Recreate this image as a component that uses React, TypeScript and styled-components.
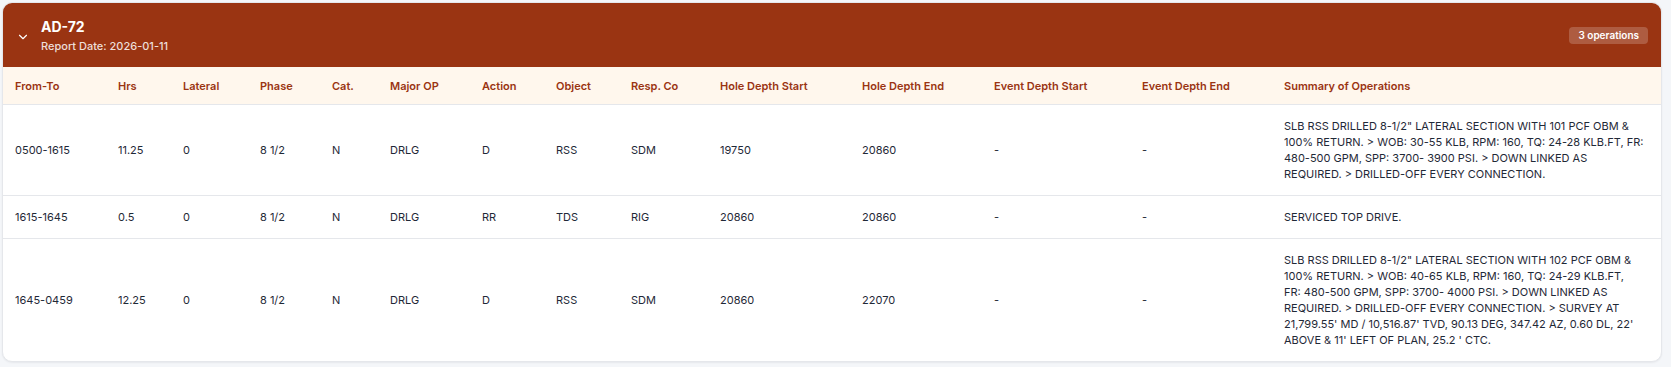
import React from "react";
import styled, { createGlobalStyle } from "styled-components";
import { ChevronDown } from "lucide-react";

const Global = createGlobalStyle`
  html, body { margin: 0; padding: 0; background: #f4f6f9; }
  body { font-family: Inter, "Noto Sans", "Liberation Sans", sans-serif; }
  * { box-sizing: border-box; }
`;

const Page = styled.div`
  padding: 2px 9px 8px 2px;
`;

const Card = styled.section`
  width: 1660px;
  background: #ffffff;
  border: 1px solid #e5e7eb;
  border-radius: 10px;
  overflow: hidden;
  box-shadow: 0 1px 2px rgba(15, 23, 42, 0.06);
`;

const Header = styled.header`
  display: flex;
  align-items: center;
  justify-content: space-between;
  height: 64px;
  padding: 0 13px 0 13px;
  background: #9a3412;
  color: #ffffff;
`;

const TitleGroup = styled.div`
  display: flex;
  align-items: center;
  gap: 11px;
`;

const Toggle = styled.span`
  display: flex;
  align-items: center;
  justify-content: center;
  width: 14px;
  height: 14px;
  margin-top: 4px;
  color: #ffffff;
`;

const TitleText = styled.div`
  display: flex;
  flex-direction: column;
  gap: 1px;
`;

const Title = styled.h2`
  margin: 0;
  font-size: 14px;
  line-height: 20px;
  font-weight: 700;
`;

const Subtitle = styled.div`
  font-size: 11px;
  line-height: 16px;
  font-weight: 500;
  color: rgba(255, 255, 255, 0.85);
`;

const Badge = styled.span`
  display: inline-flex;
  align-items: center;
  height: 17px;
  padding: 0 9px;
  border-radius: 4px;
  background: rgba(255, 255, 255, 0.2);
  font-size: 10px;
  font-weight: 600;
  color: #ffffff;
`;

const Table = styled.table`
  width: 100%;
  border-collapse: collapse;
  table-layout: fixed;
`;

const HeadCell = styled.th`
  padding: 11px 12px 10px;
  text-align: left;
  vertical-align: middle;
  font-size: 11px;
  line-height: 16px;
  font-weight: 600;
  color: #9a3412;
  background: #fff7ed;
  border-bottom: 1px solid #e5e7eb;
`;

const Row = styled.tr<{ $last?: boolean }>`
  border-bottom: ${(p) => (p.$last ? "none" : "1px solid #e5e7eb")};
`;

const Cell = styled.td`
  padding: 13px 12px;
  vertical-align: middle;
  font-size: 11px;
  line-height: 16px;
  color: #1f2937;
`;

const SummaryCell = styled(Cell)`
  padding-right: 17.4px;
`;

const columns: { label: string; width: number }[] = [
  { label: "From-To", width: 103 },
  { label: "Hrs", width: 65 },
  { label: "Lateral", width: 77 },
  { label: "Phase", width: 72 },
  { label: "Cat.", width: 58 },
  { label: "Major OP", width: 92 },
  { label: "Action", width: 74 },
  { label: "Object", width: 75 },
  { label: "Resp. Co", width: 89 },
  { label: "Hole Depth Start", width: 142 },
  { label: "Hole Depth End", width: 132 },
  { label: "Event Depth Start", width: 148 },
  { label: "Event Depth End", width: 142 },
  { label: "Summary of Operations", width: 389 },
];

const rows = [
  {
    cells: ["0500-1615", "11.25", "0", "8 1/2", "N", "DRLG", "D", "RSS", "SDM", "19750", "20860", "-", "-"],
    summary:
      'SLB RSS DRILLED 8-1/2" LATERAL SECTION WITH 101 PCF OBM & 100% RETURN. > WOB: 30-55 KLB, RPM: 160, TQ: 24-28 KLB.FT, FR: 480-500 GPM, SPP: 3700- 3900 PSI. > DOWN LINKED AS REQUIRED. > DRILLED-OFF EVERY CONNECTION.',
  },
  {
    cells: ["1615-1645", "0.5", "0", "8 1/2", "N", "DRLG", "RR", "TDS", "RIG", "20860", "20860", "-", "-"],
    summary: "SERVICED TOP DRIVE.",
  },
  {
    cells: ["1645-0459", "12.25", "0", "8 1/2", "N", "DRLG", "D", "RSS", "SDM", "20860", "22070", "-", "-"],
    summary:
      "SLB RSS DRILLED 8-1/2\" LATERAL SECTION WITH 102 PCF OBM & 100% RETURN. > WOB: 40-65 KLB, RPM: 160, TQ: 24-29 KLB.FT, FR: 480-500 GPM, SPP: 3700- 4000 PSI. > DOWN LINKED AS REQUIRED. > DRILLED-OFF EVERY CONNECTION. > SURVEY AT 21,799.55' MD / 10,516.87' TVD, 90.13 DEG, 347.42 AZ, 0.60 DL, 22' ABOVE & 11' LEFT OF PLAN, 25.2 ' CTC.",
  },
];

export default function App() {
  return (
    <>
      <Global />
      <Page>
        <Card>
          <Header>
            <TitleGroup>
              <Toggle>
                <ChevronDown size={14} strokeWidth={2} />
              </Toggle>
              <TitleText>
                <Title>AD-72</Title>
                <Subtitle>Report Date: 2026-01-11</Subtitle>
              </TitleText>
            </TitleGroup>
            <Badge>3 operations</Badge>
          </Header>
          <Table>
            <colgroup>
              {columns.map((c) => (
                <col key={c.label} style={{ width: c.width }} />
              ))}
            </colgroup>
            <thead>
              <tr>
                {columns.map((c) => (
                  <HeadCell key={c.label}>{c.label}</HeadCell>
                ))}
              </tr>
            </thead>
            <tbody>
              {rows.map((r, i) => (
                <Row key={i} $last={i === rows.length - 1}>
                  {r.cells.map((v, j) => (
                    <Cell key={j}>{v}</Cell>
                  ))}
                  <SummaryCell>{r.summary}</SummaryCell>
                </Row>
              ))}
            </tbody>
          </Table>
        </Card>
      </Page>
    </>
  );
}
